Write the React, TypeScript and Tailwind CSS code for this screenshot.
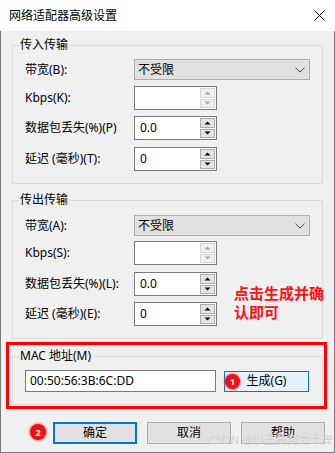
import React from "react";

function Arrow({ up, color }: { up: boolean; color: string }) {
  return (
    <svg width="7" height="4" viewBox="0 0 7 4" className="block">
      {up ? <path d="M0.5 3.5 L3.5 0.5 L6.5 3.5 Z" fill={color} /> : <path d="M0.5 0.5 L3.5 3.5 L6.5 0.5 Z" fill={color} />}
    </svg>
  );
}

function Spin({ disabled }: { disabled?: boolean }) {
  const c = disabled ? "#a8a8a8" : "#000000";
  return (
    <div className="flex flex-col w-[16px] py-[1px] pr-[1px] gap-[1px]">
      <div
        className={
          disabled
            ? "flex-1 flex items-center justify-center border border-[#d6d6d6] bg-[#f0f0f0]"
            : "flex-1 flex items-center justify-center border border-[#adadad] bg-[#e5e5e5]"
        }
      >
        <Arrow up color={c} />
      </div>
      <div
        className={
          disabled
            ? "flex-1 flex items-center justify-center border border-[#d6d6d6] bg-[#f0f0f0]"
            : "flex-1 flex items-center justify-center border border-[#adadad] bg-[#e5e5e5]"
        }
      >
        <Arrow up={false} color={c} />
      </div>
    </div>
  );
}

function NumInput({ value, disabled }: { value?: string; disabled?: boolean }) {
  return (
    <div className="w-[83px] h-[24px] border border-[#7a7a7a] bg-white flex items-stretch">
      <div className="flex-1 pl-[5px] flex items-center text-[12px] text-black leading-none">{value}</div>
      <Spin disabled={disabled} />
    </div>
  );
}

function Select() {
  return (
    <div className="w-[176px] h-[21px] border border-[#adadad] bg-[#e1e1e1] flex items-center justify-between pl-[3px] pr-[4px]">
      <span className="text-[12px] text-black leading-none">不受限</span>
      <svg width="10" height="6" viewBox="0 0 10 6" className="block">
        <path d="M0.5 0.8 L5 5 L9.5 0.8" fill="none" stroke="#444" strokeWidth="1" />
      </svg>
    </div>
  );
}

function Row({ label, children, cls }: { label: string; children: React.ReactNode; cls: string }) {
  return (
    <div className={"flex items-center " + cls}>
      <div className="w-[109px] text-[12px] text-black leading-none whitespace-nowrap">{label}</div>
      {children}
    </div>
  );
}

function Btn({ label, primary }: { label: string; primary?: boolean }) {
  return (
    <div
      className={
        primary
          ? "w-[84px] h-[22px] border-2 border-[#0078d7] bg-[#e1e1e1] flex items-center justify-center text-[12px] text-black"
          : "w-[84px] h-[22px] border border-[#adadad] bg-[#e1e1e1] flex items-center justify-center text-[12px] text-black"
      }
    >
      {label}
    </div>
  );
}

function Badge({ n }: { n: string }) {
  return (
    <div className="w-full h-full rounded-full bg-[#f01010] shadow-[0_0_2px_1px_rgba(255,60,60,0.6)] flex items-center justify-center text-white text-[9px] font-bold leading-none">
      {n}
    </div>
  );
}

export default function App() {
  return (
    <div className="relative w-[335px] h-[453px] bg-[#f0f0f0] overflow-hidden font-['Noto_Sans','Noto_Sans_CJK_SC',sans-serif] text-black">
      {/* title bar */}
      <div className="h-[31px] bg-white flex items-center justify-between pl-[9px] pr-[10px]">
        <span className="text-[12px] leading-none">网络适配器高级设置</span>
        <svg width="11" height="11" viewBox="0 0 11 11" className="block">
          <path d="M0.5 0.5 L10.5 10.5 M10.5 0.5 L0.5 10.5" stroke="#000" strokeWidth="1" />
        </svg>
      </div>
      <div className="h-[422px] border-x border-b border-[#7a7a7a] pl-[11px] pr-[11px] flex flex-col">
        {/* group 1 */}
        <fieldset className="mt-[6px] border border-[#dcdcdc] p-0 m-0">
          <legend className="ml-[6px] px-[1px] text-[12px] leading-[16px]">传入传输</legend>
          <div className="px-[12px] pb-[12px] flex flex-col">
            <Row label="带宽(B):" cls="mt-[6px] h-[21px]">
              <Select />
            </Row>
            <Row label="Kbps(K):" cls="mt-[6px] h-[24px]">
              <NumInput disabled />
            </Row>
            <Row label="数据包丢失(%)(P)" cls="mt-[6px] h-[24px]">
              <NumInput value="0.0" />
            </Row>
            <Row label="延迟 (毫秒)(T):" cls="mt-[7px] h-[24px]">
              <NumInput value="0" />
            </Row>
          </div>
        </fieldset>

        {/* group 2 */}
        <fieldset className="relative mt-[8px] border border-[#dcdcdc] p-0 m-0">
          <legend className="ml-[6px] px-[1px] text-[12px] leading-[16px]">传出传输</legend>
          <div className="px-[12px] pb-[12px] flex flex-col">
            <Row label="带宽(A):" cls="mt-[7px] h-[21px]">
              <Select />
            </Row>
            <Row label="Kbps(S):" cls="mt-[5px] h-[24px]">
              <NumInput disabled />
            </Row>
            <Row label="数据包丢失(%)(L):" cls="mt-[7px] h-[24px]">
              <NumInput value="0.0" />
            </Row>
            <Row label="延迟 (毫秒)(E):" cls="mt-[6px] h-[24px]">
              <NumInput value="0" />
            </Row>
          </div>
          <div className="absolute left-[221px] top-[75px] whitespace-nowrap text-[15px] leading-[19px] font-bold text-[#ff1111] font-['Noto_Sans_CJK_SC',sans-serif]">
            点击生成并确
            <br />
            认即可
          </div>
        </fieldset>

        {/* group 3 */}
        <div className="relative mt-[9px]">
          <fieldset className="border border-[#dcdcdc] p-0 m-0">
            <legend className="ml-[6px] px-[1px] text-[12px] leading-[16px]">MAC 地址(M)</legend>
            <div className="px-[12px] pb-[12px] flex items-center mt-[6px]">
              <div className="w-[191px] h-[22px] border border-[#7a7a7a] bg-white flex items-center pl-[4px] text-[12px] leading-none">
                00:50:56:3B:6C:DD
              </div>
              <div className="relative ml-[8px] w-[85px] h-[21px] border border-[#0078d7] bg-[#e5f1fb] flex items-center justify-center text-[12px]">
                生成(G)
                <div className="absolute left-[0px] top-[2px] w-[15px] h-[15px]">
                  <Badge n="1" />
                </div>
              </div>
            </div>
          </fieldset>
          <div className="pointer-events-none absolute left-[-6px] right-[-4px] top-[-6px] bottom-[-4px] border-[3px] border-[#ff0000]" />
        </div>

        {/* buttons */}
        <div className="mt-[17px] flex justify-end gap-[10px] mr-[-2px]">
          <Btn label="确定" primary />
          <Btn label="取消" />
          <Btn label="帮助" />
        </div>
      </div>

      <div className="absolute left-[30px] top-[424px] w-[16px] h-[16px]">
        <Badge n="2" />
      </div>
      <div className="absolute right-[2px] top-[433px] text-[11.5px] leading-[14px] text-[rgba(190,190,190,0.75)] [text-shadow:0_0_1px_rgba(255,255,255,0.8)] whitespace-nowrap">
        CSDN @小王要努力上岸
      </div>
    </div>
  );
}
